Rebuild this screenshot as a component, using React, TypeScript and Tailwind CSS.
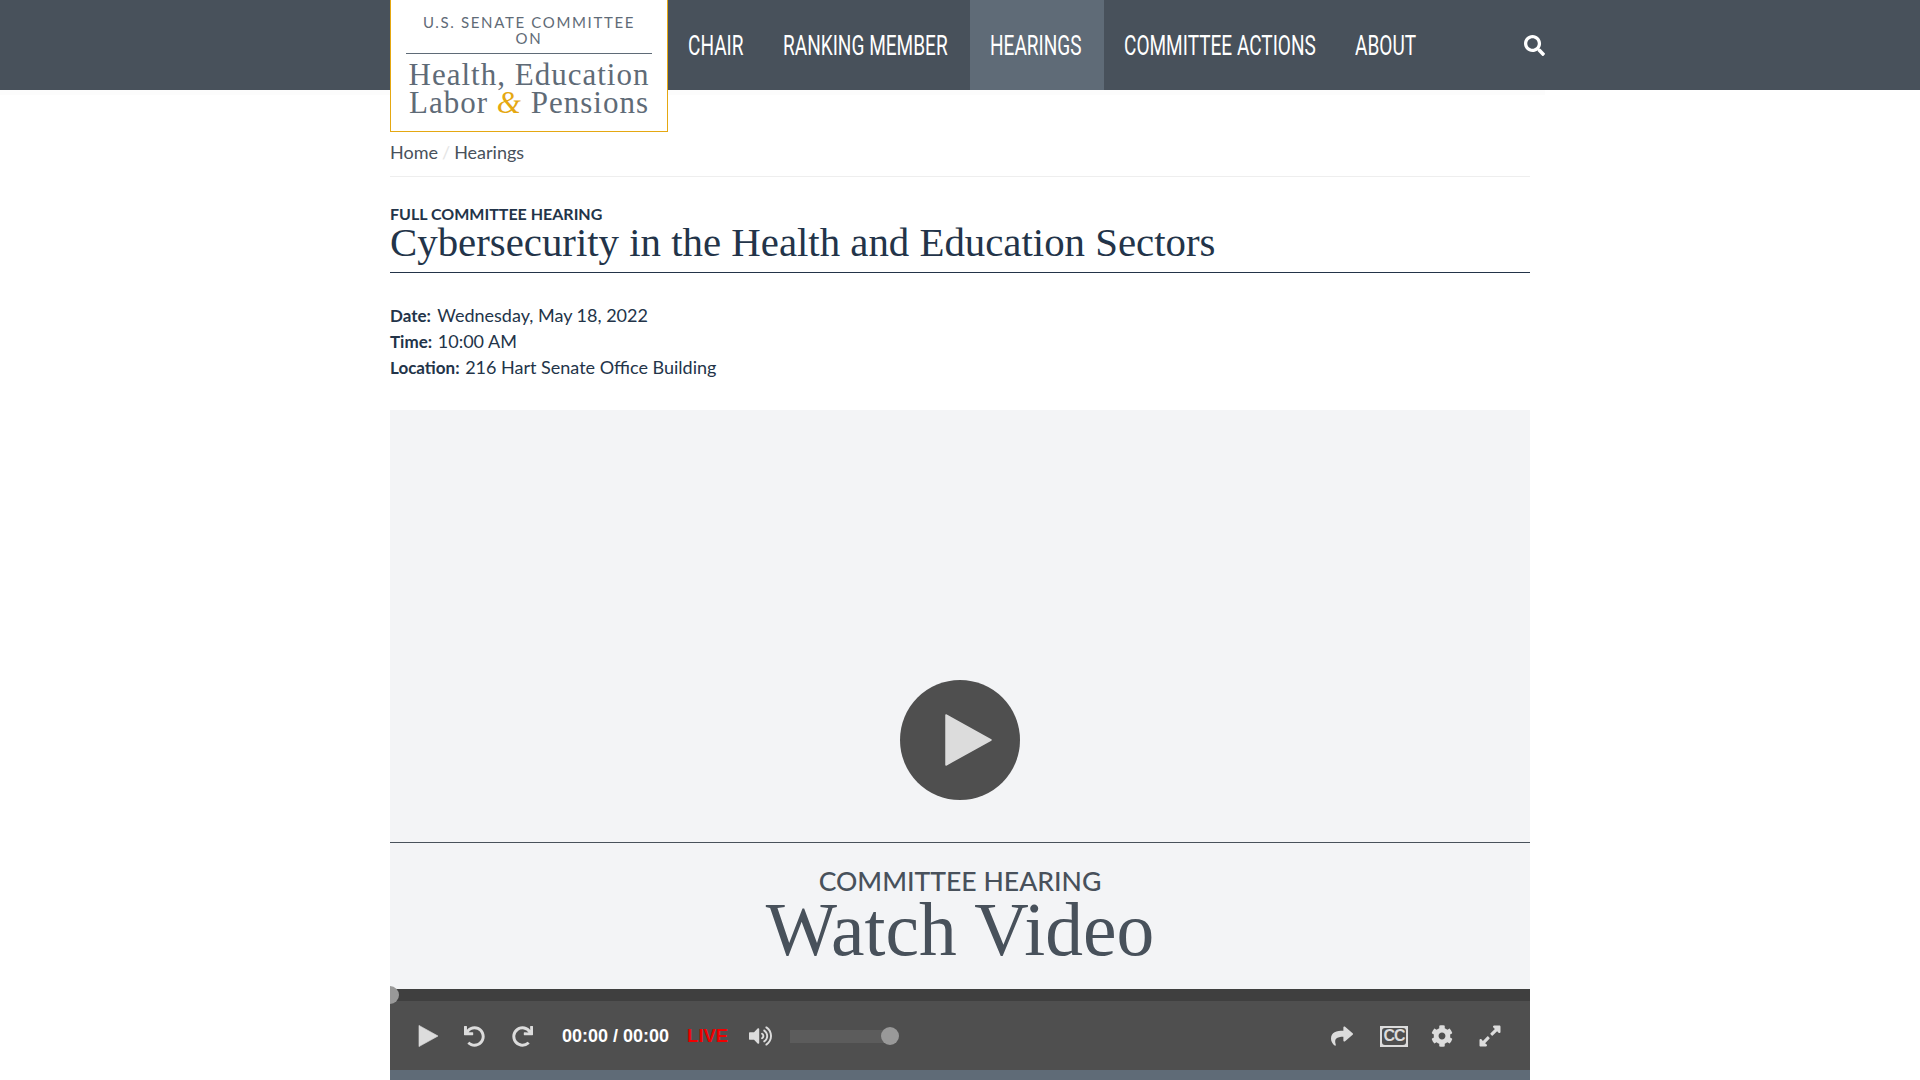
import { FaCog, FaExpandAlt, FaRedo, FaSearch, FaShare, FaUndo, FaVolumeUp } from "react-icons/fa";

const NAV = [
  { label: "CHAIR", width: "w-[95px]" },
  { label: "RANKING MEMBER", width: "w-[207px]" },
  { label: "HEARINGS", width: "w-[134px]", active: true },
  { label: "COMMITTEE ACTIONS", width: "w-[231px]" },
  { label: "ABOUT", width: "w-[103px]" },
];

const sans = "font-['Lato','Liberation_Sans',sans-serif]";
const serif = "font-['Liberation_Serif','DejaVu_Serif',serif]";

function Triangle({ className }: { className: string }) {
  return (
    <svg viewBox="0 0 47 52" className={className} fill="currentColor">
      <path d="M1 1 L46 26 L1 51 Z" stroke="currentColor" strokeWidth="1.5" strokeLinejoin="round" />
    </svg>
  );
}

function Logo() {
  return (
    <a className="relative z-10 flex h-[132px] w-[278px] shrink-0 flex-col items-center border border-t-0 border-[#e5a812] bg-white px-[15px] pt-[14px]">
      <div className={`${sans} w-full border-b border-[#5f6b77] pb-[7px] text-center text-[15px] leading-[16px] tracking-[1.65px] text-[#5f6b77]`}>
        U.S. SENATE COMMITTEE
        <br />
        ON
      </div>
      <div className={`${serif} mt-[7px] whitespace-nowrap text-center text-[31px] leading-[28px] tracking-[1px] text-[#5f6b77]`}>
        <div>Health, Education</div>
        <div>
          Labor <span className="italic text-[#e5a812]">&amp;</span> Pensions
        </div>
      </div>
    </a>
  );
}

function Header() {
  return (
    <header className="relative h-[90px] bg-[#48515b]">
      <div className="absolute left-0 top-full h-[5px] w-[1545px] bg-[#fcfcfc]" />
      <div className="mx-auto flex w-[1140px] items-start">
        <Logo />
        <nav className="flex h-[90px]">
          {NAV.map((item) => (
            <a
              key={item.label}
              className={`flex h-[90px] items-center whitespace-nowrap pl-[20px] pt-[2px] font-['Roboto',sans-serif] text-[28px] text-white ${item.width} ${item.active ? "bg-[#5f6b77]" : ""}`}
            >
              <span className="inline-block origin-left scale-x-[0.68]">{item.label}</span>
            </a>
          ))}
        </nav>
        <FaSearch className="ml-auto mr-[-15px] mt-[35px] h-[21px] w-[21px] text-white" />
      </div>
    </header>
  );
}

function Controls() {
  return (
    <div className="flex h-[69px] items-center bg-[#4f4f4f] pt-[1px] text-[#dcdcdc]">
      <Triangle className="ml-[28px] h-[22px] w-[21px]" />
      <FaUndo className="ml-[25px] h-[21px] w-[21px]" />
      <FaRedo className="ml-[27px] h-[21px] w-[21px]" />
      <span className="ml-[29px] font-['Liberation_Sans',sans-serif] text-[18px] font-bold text-white">00:00 / 00:00</span>
      <span className="ml-[18px] font-['Liberation_Sans',sans-serif] text-[18.5px] font-bold text-[#f00000]">LIVE</span>
      <FaVolumeUp className="ml-[21px] h-[22px] w-[23px]" />
      <div className="relative ml-[18px] h-[13px] w-[100px] bg-[#5c5c5c]">
        <span className="absolute right-[-9px] top-[-3px] h-[18px] w-[18px] rounded-full bg-[#999999]" />
      </div>
      <FaShare className="ml-auto h-[22px] w-[26px]" />
      <span className="ml-[25px] flex h-[21px] w-[28px] items-center justify-center bg-[#dcdcdc] p-[2px]">
        <span className="flex h-full w-full items-center justify-center rounded-[3px] bg-[#4f4f4f] font-['Liberation_Sans',sans-serif] text-[16px] font-bold leading-none tracking-[-1px] text-[#dcdcdc]">
          CC
        </span>
      </span>
      <FaCog className="ml-[23px] h-[22px] w-[22px]" />
      <FaExpandAlt className="ml-[25px] mr-[28px] h-[24px] w-[24px]" />
    </div>
  );
}

function Video() {
  return (
    <section className="mt-[30px] bg-[#f3f4f6]">
      <div className="flex h-[433px] items-end justify-center border-b border-[#48515b] pb-[42px]">
        <div className="flex h-[120px] w-[120px] items-center justify-center rounded-full bg-[#4f4f4f]">
          <Triangle className="ml-[16px] h-[52px] w-[47px] text-[#dcdcdc]" />
        </div>
      </div>
      <div className="flex h-[146px] flex-col items-center pt-[22px] text-[#48515b]">
        <div className={`${sans} text-[26.6px] font-medium leading-[32px]`}>COMMITTEE HEARING</div>
        <div className={`${serif} text-[75.5px] leading-[66px]`}>Watch Video</div>
      </div>
      <div className="relative h-[12px] bg-[#3f3f3f]">
        <span className="absolute left-0 top-[-3px] h-[18px] w-[9px] rounded-r-full bg-[#999999]" />
      </div>
      <Controls />
      <div className="h-[10px] bg-[#5f6b77]" />
    </section>
  );
}

export default function App() {
  return (
    <div className={`${sans} h-screen overflow-hidden bg-white`}>
      <Header />
      <main className="mx-auto w-[1140px] text-[#233449]">
        <div className="flex h-[87px] items-end border-b border-[#eeeeee] pb-[10px] text-[18px] text-[#48515b]">
          Home
          <span className="mx-[4px] text-[#e5e5e5]">/</span>
          Hearings
        </div>
        <div className="mt-[27px] text-[16px] font-bold leading-[20px]">FULL COMMITTEE HEARING</div>
        <h1 className={`${serif} border-b border-[#233449] pb-[11px] text-[40.85px] leading-[37px]`}>
          Cybersecurity in the Health and Education Sectors
        </h1>
        <div className="mt-[29px] text-[18px] leading-[26px]">
          <div><b className="pr-[2px] text-[17px] leading-none">Date:</b> Wednesday, May 18, 2022</div>
          <div><b className="pr-[1px] text-[17px] leading-none">Time:</b> 10:00 AM</div>
          <div><b className="pr-[1px] text-[17px] leading-none">Location:</b> 216 Hart Senate Office Building</div>
        </div>
        <Video />
      </main>
    </div>
  );
}
